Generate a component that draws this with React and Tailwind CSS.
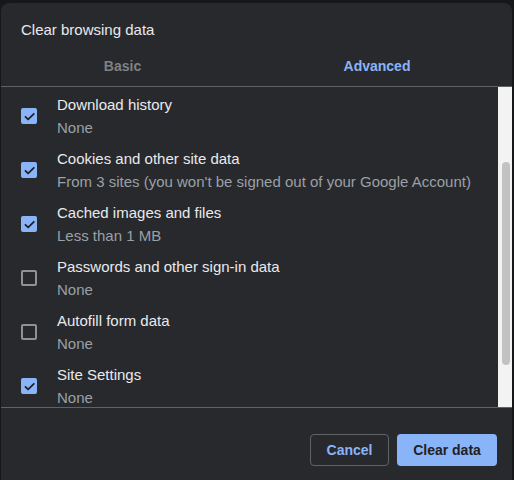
const items = [
  { label: "Download history", detail: "None", checked: true },
  { label: "Cookies and other site data", detail: "From 3 sites (you won't be signed out of your Google Account)", checked: true },
  { label: "Cached images and files", detail: "Less than 1 MB", checked: true },
  { label: "Passwords and other sign-in data", detail: "None", checked: false },
  { label: "Autofill form data", detail: "None", checked: false },
  { label: "Site Settings", detail: "None", checked: true },
];

const Checkbox = ({ checked }) => (
  checked ? (
    <span className="flex h-4 w-4 shrink-0 items-center justify-center rounded-[2px] bg-[#8ab4f8]">
      <svg width="13" height="13" viewBox="0 0 24 24" fill="none">
        <path d="M4.5 12.5l5 5L20 7" stroke="#202124" strokeWidth="3.2" strokeLinecap="round" strokeLinejoin="round" />
      </svg>
    </span>
  ) : (
    <span className="h-4 w-4 shrink-0 rounded-[2px] border-2 border-[#8e9195]" />
  )
);

const App = () => {
  return (
    <div className="h-[480px] w-[514px] overflow-hidden bg-[#161719] pl-[1px] pt-[3px]" style={{ fontFamily: '"Liberation Sans", Arial, sans-serif' }}>
      <div className="h-[480px] w-[511px] rounded-t-[8px] bg-[#28292c]">
        <div className="px-5 pt-[17px] text-[15px] leading-5 text-[#e8eaed]">Clear browsing data</div>
        <div className="flex border-b border-[#606266] pb-[10px] pt-[16px] text-[14px] font-bold leading-5">
          <div className="w-[243px] text-center text-[#7f8285]">Basic</div>
          <div className="w-[266px] text-center text-[#8ab4f8]">Advanced</div>
        </div>
        <div className="flex h-[321px] border-b border-[#606266]">
          <div className="flex-1 overflow-hidden pt-[2px]">
            {items.map((item) => (
              <div key={item.label} className="flex h-[54px] shrink-0 items-center gap-5 px-5">
                <Checkbox checked={item.checked} />
                <div className="text-[15px] leading-5">
                  <div className="text-[#e8eaed]">{item.label}</div>
                  <div className="mt-[3px] text-[#9aa0a6]">{item.detail}</div>
                </div>
              </div>
            ))}
          </div>
          <div className="flex w-[14px] flex-col bg-[#f3f3f3] pl-[4px] pr-[2px] pt-[75px]">
            <div className="h-[203px] rounded-full bg-[#c2c2c2]" />
          </div>
        </div>
        <div className="flex justify-end gap-2 pr-[15px] pt-[26px]">
          <button type="button" className="h-8 w-[79px] rounded-[4px] border border-[#5f6368] text-[14px] font-bold text-[#8ab4f8]">Cancel</button>
          <button type="button" className="h-8 w-[100px] rounded-[4px] bg-[#8ab4f8] text-[14px] font-bold text-[#202124]">Clear data</button>
        </div>
      </div>
    </div>
  );
};

export default App;
